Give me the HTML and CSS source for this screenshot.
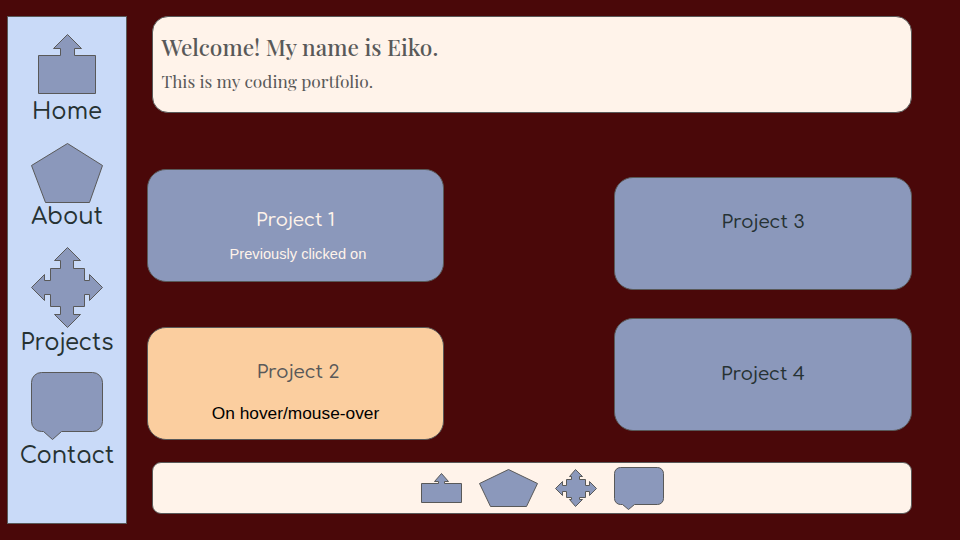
FILE: index.html
```html
<!DOCTYPE html>
<html lang="en">
<head>
<meta charset="utf-8">
<title>Eiko's Portfolio</title>
<link rel="stylesheet" href="styles.css">
</head>
<body>
<nav class="sidebar">
  <a class="nav-item home">
    <svg width="72" height="61" viewBox="0 0 72 61"><path d="M7.5 21.5H29.5V14.5H22.5L36.500 .5L50.500 14.500H43.500V21.500H64.500V59.500H7.500Z"/></svg>
    <span class="label">Home</span>
  </a>
  <a class="nav-item about">
    <svg width="72" height="61" viewBox="0 0 72 61"><path d="M36.500 .5L71.500 22.500L58.500 59.500H14.500L.5 22.500Z"/></svg>
    <span class="label">About</span>
  </a>
  <a class="nav-item projects-link">
    <svg width="72" height="81" viewBox="0 0 72 81"><path d="M36.500 .5L49.500 13.500H42.500V21.500H53.500V33.500H58.500V27.500L71.500 40.500L58.500 53.500V47.500H53.500V59.500H42.500V67.500H49.500L36.500 80.500L23.500 67.500H29.500V59.500H19.500V47.500H13.500V53.500L.5 40.500L13.500 27.500V33.500H19.500V21.500H29.500V13.500H23.500Z"/></svg>
    <span class="label">Projects</span>
  </a>
  <a class="nav-item contact">
    <svg width="72" height="69" viewBox="0 0 72 69"><path d="M10.500 .5H61.500A10 10 0 0 1 71.500 10.500V49.500A10 10 0 0 1 61.500 59.500H30.500L21.500 67.500L12.500 59.500H10.500A10 10 0 0 1 .5 49.500V10.500A10 10 0 0 1 10.500 .5Z"/></svg>
    <span class="label">Contact</span>
  </a>
</nav>
<main class="content">
  <header class="welcome">
    <h1>Welcome! My name is Eiko.</h1>
    <p>This is my coding portfolio.</p>
  </header>
  <section class="projects">
    <div class="column left">
      <article class="card visited"><h2>Project 1</h2><p>Previously clicked on</p></article>
      <article class="card hovered"><h2>Project 2</h2><p>On hover/mouse-over</p></article>
    </div>
    <div class="column right">
      <article class="card third"><h2>Project 3</h2></article>
      <article class="card fourth"><h2>Project 4</h2></article>
    </div>
  </section>
  <footer class="footer">
    <svg class="foot-home" width="42" height="31" viewBox="0 0 42 31"><path d="M.5 10.500H17.500V8.500H13.500L20.500 .5L27.500 8.500H23.500V10.500H40.500V29.500H.5Z"/></svg>
    <svg class="foot-about" width="60" height="39" viewBox="0 0 60 39"><path d="M29.500 .5L58.500 14.500L47.500 37.500H11.500L.5 14.500Z"/></svg>
    <svg class="foot-projects" width="42" height="39" viewBox="0 0 42 39"><path d="M20.500 .5L27.500 7.500H24.500V10.500H30.500V16.500H34.500V12.500L41.500 19.500L34.500 26.500V22.500H30.500V28.500H24.500V30.500H27.500L20.500 37.500L14.500 30.500H16.500V28.500H11.500V22.500H7.500V26.500L.5 19.500L7.500 12.500V16.500H11.500V10.500H16.500V7.500H14.500Z"/></svg>
    <svg class="foot-contact" width="50" height="44" viewBox="0 0 50 44"><path d="M6.500 .5H43.500A6 6 0 0 1 49.500 6.500V31.500A6 6 0 0 1 43.500 37.500H20.500L14.500 42.500L8.500 37.500H6.500A6 6 0 0 1 .5 31.500V6.500A6 6 0 0 1 6.500 .5Z"/></svg>
  </footer>
</main>
</body>
</html>
```
FILE: styles.css
```css
* { box-sizing: border-box; }

body {
  margin: 0;
  height: 540px;
  padding: 16px 48px 16px 7px;
  display: flex;
  align-items: flex-start;
  overflow: hidden;
  background: #4a0809;
  font-family: "Liberation Sans", Arial, sans-serif;
}

h1, h2, p { margin: 0; font-weight: 400; white-space: nowrap; }

svg {
  display: block;
  flex: none;
  fill: #8b98bb;
  stroke: #595959;
  stroke-width: 1;
}

.sidebar {
  flex: none;
  width: 120px;
  height: 508px;
  padding-top: 17px;
  border: 1px solid #595959;
  background: #c9daf8;
}

.nav-item { display: flex; flex-direction: column; align-items: center; }
.about { margin-top: 17px; }
.projects-link { margin-top: 16px; }
.contact { margin-top: 15px; }

.label {
  height: 28px;
  font: 500 22.67px/28px Comfortaa, Lato, sans-serif;
  color: #263233;
}
.home .label { margin-top: 3px; }
.about .label { margin-top: -1px; }
.projects-link .label { margin-top: 1px; }
.contact .label { margin-top: 1px; }

.content { flex: 1; padding-left: 20px; }

.welcome {
  height: 97px;
  margin-left: 5px;
  padding: 15px 8.5px;
  border: 1px solid #595959;
  border-radius: 16px;
  background: #fff3ea;
  color: #595959;
}
.welcome h1 {
  font: 500 22.67px/30px "Playfair Display", "Liberation Serif", serif;
}
.welcome p {
  margin-top: 7px;
  font: 17.33px/24px "Playfair Display", "Liberation Serif", serif;
}

.projects { display: flex; justify-content: space-between; height: 349px; }
.column { display: flex; flex-direction: column; }
.left { width: 297px; padding-top: 56px; gap: 45px; }
.right { width: 298px; padding-top: 64px; gap: 28px; }

.card {
  height: 113px;
  border: 1px solid #595959;
  border-radius: 19px;
  background: #8b98bb;
  color: #263233;
  text-align: center;
}
.card h2 { font: 500 18.67px/26px Comfortaa, Lato, sans-serif; }
.visited { padding-top: 37px; color: #fff3ea; }
.visited p { margin: 12px 0 0 5px; font-size: 14.67px; line-height: 18px; }
.hovered { padding-top: 31px; background: #fbce9f; color: #595959; }
.hovered h2 { padding-left: 5px; }
.hovered p { margin-top: 17px; font-size: 17.33px; line-height: 22px; color: #000; }
.third { padding-top: 31px; }
.fourth { padding-top: 42px; }

.footer {
  display: flex;
  align-items: flex-start;
  height: 52px;
  margin-left: 5px;
  padding: 4px 0 0 268px;
  border: 1px solid #595959;
  border-radius: 9px;
  background: #fff3ea;
}
.foot-home { margin-top: 6px; }
.foot-about { margin: 2px 0 0 16px; }
.foot-projects { margin: 2px 0 0 16px; }
.foot-contact { margin-left: 17px; }
```
